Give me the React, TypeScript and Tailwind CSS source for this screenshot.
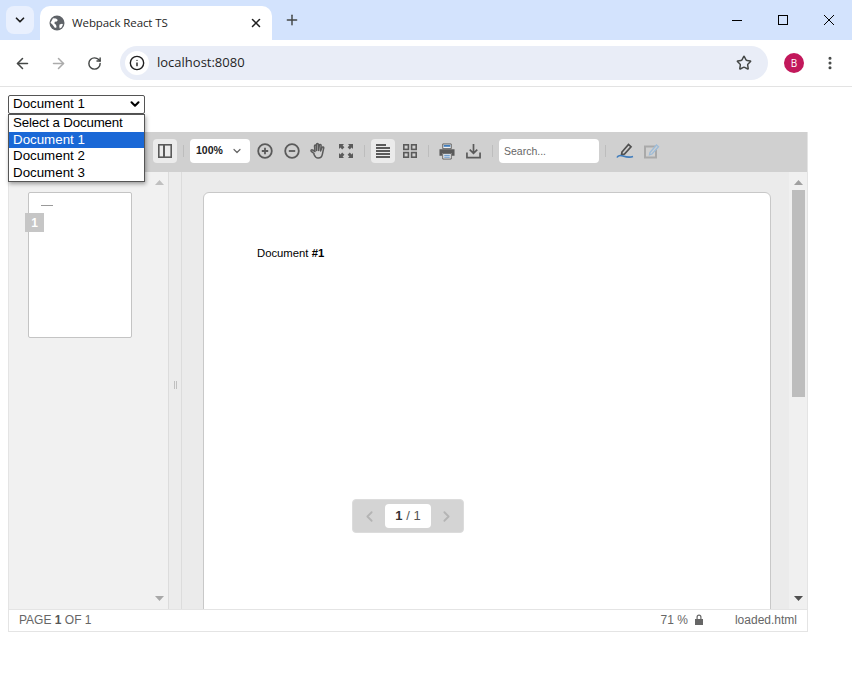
import { ChevronDown, Plus, X, ArrowLeft, ArrowRight, RotateCw, Star, EllipsisVertical, Info, ChevronLeft, ChevronRight } from "lucide-react";

const font = { sans: "font-['Liberation_Sans',Arial,sans-serif]" };

function Tri({ up, color }: { up?: boolean; color: string }) {
  return (
    <svg width="9" height="5" viewBox="0 0 9 5">
      <path d={up ? "M4.5 0L9 5H0z" : "M0 0h9L4.5 5z"} fill={color} />
    </svg>
  );
}

function ChromeBar() {
  return (
    <>
      {/* tab strip */}
      <div className="h-10 bg-[#d3e3fd] flex items-start shrink-0">
        <div className="w-7 h-7 ml-1.5 mt-1.5 rounded-lg bg-[#e9f0fe] flex items-center justify-center">
          <ChevronDown size={14} strokeWidth={3} className="text-[#1f1f1f]" />
        </div>
        <div className="w-[232px] h-[34px] ml-[6px] mt-1.5 bg-white rounded-t-[10px] flex items-center pl-[9px] pr-[9px]">
          <svg width="16" height="16" viewBox="0 0 16 16" className="shrink-0">
            <circle cx="8" cy="8" r="7.5" fill="#5f6368" />
            <path d="M4 3.2l3 .3 1.8 1.5-1 1.6-2 .2-.4 1.700 1.600 1.200.6 2.600L6 13 3.400 9.500 1.500 7.800zM10.500 9.500l2.500-.8 1 .8-1.500 3-1.800 1-.4-2z" fill="#fff" />
          </svg>
          <span className="ml-[7px] text-[11.5px] text-[#1f1f1f] flex-1 font-['Open_Sans',sans-serif] tracking-[-0.1px]">Webpack React TS</span>
          <X size={14} strokeWidth={2.6} className="text-[#1f1f1f]" />
        </div>
        <Plus size={16} strokeWidth={2.2} className="ml-[12px] mt-3 text-[#444746]" />
        <div className="flex-1" />
        <div className="w-[46px] h-10 flex items-center justify-center">
          <svg width="10" height="10" viewBox="0 0 10 10" fill="none" stroke="#000"><path d="M0 5.500h10" /></svg>
        </div>
        <div className="w-[46px] h-10 flex items-center justify-center">
          <svg width="10" height="10" viewBox="0 0 10 10" fill="none" stroke="#000"><rect x="0.500" y="0.500" width="9" height="9" /></svg>
        </div>
        <div className="w-[46px] h-10 flex items-center justify-center">
          <svg width="10" height="10" viewBox="0 0 10 10" fill="none" stroke="#000"><path d="M0 0l10 10M10 0L0 10" /></svg>
        </div>
      </div>
      {/* address row */}
      <div className="h-[47px] bg-white border-b border-[#e3e3e3] flex items-center shrink-0">
        <ArrowLeft size={17} strokeWidth={2.2} className="ml-[14px] text-[#444746]" />
        <ArrowRight size={17} strokeWidth={2.2} className="ml-[19px] text-[#ababab]" />
        <RotateCw size={15} strokeWidth={2.3} className="ml-[20px] text-[#444746]" />
        <div className="ml-[18px] w-[648px] h-[34px] rounded-full bg-[#e9edf7] flex items-center pl-[5px]">
          <div className="w-6 h-6 rounded-full bg-white flex items-center justify-center">
            <Info size={16} strokeWidth={2.1} className="text-[#1f1f1f]" />
          </div>
          <span className="ml-2 text-[13px] text-[#1f1f1f] flex-1 font-['Open_Sans',sans-serif]">localhost:8080</span>
          <Star size={16} strokeWidth={2.2} className="mr-[16px] text-[#444746]" />
        </div>
        <div className="ml-[16px] w-5 h-5 rounded-full bg-[#c2185b] text-white text-[10px] flex items-center justify-center font-['Open_Sans',sans-serif]">B</div>
        <EllipsisVertical size={16} strokeWidth={2.6} className="ml-[18px] text-[#444746]" />
      </div>
    </>
  );
}

function ViewerToolbar() {
  return (
    <div className="h-10 bg-[#d0d0d0] flex items-center pl-[144px] pb-[2px] shrink-0">
      <div className="w-6 h-6 rounded-sm bg-[#ebebeb] flex items-center justify-center">
        <svg width="14" height="14" viewBox="0 0 14 14" fill="none" stroke="#5a5a5a" strokeWidth="1.6">
          <rect x="0.800" y="0.800" width="12.400" height="12.400" />
          <path d="M6 1v12" strokeWidth="2" />
        </svg>
      </div>
      <div className="w-px h-3 bg-[#bdbdbd] ml-1.5" />
      <div className="ml-1.5 w-[60px] h-6 bg-white rounded-sm flex items-center pl-1.5 text-[10.5px] font-bold text-[#222]">
        100%
        <ChevronDown size={12} strokeWidth={2.4} className="ml-2 text-[#666]" />
      </div>
      <svg width="18" height="18" viewBox="0 0 18 18" className="ml-1.5" fill="none" stroke="#5a5a5a" strokeWidth="1.8">
        <circle cx="9" cy="9" r="6.800" />
        <path d="M5.800 9h6.400M9 5.800v6.400" />
      </svg>
      <svg width="18" height="18" viewBox="0 0 18 18" className="ml-[9px]" fill="none" stroke="#5a5a5a" strokeWidth="1.8">
        <circle cx="9" cy="9" r="6.800" />
        <path d="M5.800 9h6.400" />
      </svg>
      <svg width="18" height="18" viewBox="0 0 18 18" className="ml-[9px]" fill="none" stroke="#5a5a5a" strokeWidth="1.5" strokeLinecap="round" strokeLinejoin="round">
        <path d="M4 11.500L1.300 9.300c-.7-.8.300-2 1.300-1.300L5 9.500 4.500 4c0-1.200 1.700-1.200 1.800 0l.4 4.500-.2-6c0-1.200 1.800-1.200 1.900 0l.3 6 .6-5.200c.2-1.200 1.900-1 1.800.2l-.5 5.500 1.400-3.500c.5-1 2-.5 1.700.6l-1.300 6c-.4 2.200-2 3.900-4 3.900H8c-1.800 0-3-1.300-4-3.500z" />
      </svg>
      <svg width="16" height="16" viewBox="0 0 16 16" className="ml-[10px]" fill="#5a5a5a">
        <path d="M1 1h5L4.600 2.400 6.400 4.200 4.200 6.400 2.400 4.600 1 6zM15 1v5l-1.400-1.400-1.800 1.800-2.200-2.200 1.800-1.800L10 1zM1 15v-5l1.400 1.400 1.800-1.800 2.200 2.200-1.800 1.800L6 15zM15 15h-5l1.400-1.400-1.800-1.800 2.200-2.200 1.800 1.800L15 10z" />
      </svg>
      <div className="w-px h-3 bg-[#bdbdbd] ml-[10px]" />
      <div className="w-6 h-6 rounded-sm bg-[#ebebeb] flex items-center justify-center ml-1.5">
        <svg width="14" height="14" viewBox="0 0 14 14" fill="#5a5a5a">
          <path d="M0 0h10v2H0zM0 3h14v2H0zM0 6h14v2H0zM0 9h14v2H0zM0 12h14v2H0z" />
        </svg>
      </div>
      <svg width="14" height="14" viewBox="0 0 14 14" className="ml-2" fill="none" stroke="#5a5a5a" strokeWidth="1.6">
        <rect x="0.800" y="0.800" width="4.600" height="4.600" />
        <rect x="8.600" y="0.800" width="4.600" height="4.600" />
        <rect x="0.800" y="8.600" width="4.600" height="4.600" />
        <rect x="8.600" y="8.600" width="4.600" height="4.600" />
      </svg>
      <div className="w-px h-3 bg-[#bdbdbd] ml-[11px]" />
      <svg width="16" height="17" viewBox="0 0 17 17" className="ml-[10px]">
        <path d="M4 0.500h9v5H4z" fill="#f2f2f2" stroke="#5a5a5a" />
        <path d="M5 1.500h7v2H5z" fill="#3f7cbc" />
        <path d="M0.500 6h16v7h-3v-3h-10v3h-3z" fill="#5a5a5a" />
        <path d="M4 10.500h9v6H4z" fill="#f5f5f5" stroke="#5a5a5a" />
        <path d="M5.500 12.500h6M5.500 14.500h6" stroke="#3f7cbc" />
      </svg>
      <svg width="15" height="16" viewBox="0 0 16 16" className="ml-[11px]" fill="none" stroke="#5a5a5a" strokeWidth="1.800">
        <path d="M8 0.500v10M4 6.500l4 4 4-4" />
        <path d="M1 9.500v5.500h14V9.500" />
      </svg>
      <div className="w-px h-3 bg-[#bdbdbd] ml-[11px]" />
      <div className="ml-1.5 w-[100px] h-6 bg-white rounded-sm flex items-center pl-[5px] pt-px text-[10.5px] text-[#666]">Search...</div>
      <div className="w-px h-3 bg-[#bdbdbd] ml-1.5" />
      <svg width="18" height="18" viewBox="0 0 18 18" className="ml-[10px]" fill="none">
        <path d="M6 10L12.500 2.500l2.500 2.200L8.500 12l-3 1z" stroke="#505050" strokeWidth="1.700" />
        <path d="M1 15.500c1-2.500 3-2.500 6-1.500s6 2 10 .5" stroke="#3f7cbc" strokeWidth="1.600" />
      </svg>
      <svg width="16" height="16" viewBox="0 0 16 16" className="ml-[10px]" fill="none">
        <path d="M1 3.500h11v11H1z" stroke="#a9a9a9" strokeWidth="2" />
        <path d="M6 9.500L12.500 2l2 1.800L8 11l-2.500.8z" stroke="#9dbcd8" strokeWidth="1.300" fill="#d0d0d0" />
      </svg>
    </div>
  );
}

export default function App() {
  return (
    <div className={`w-[852px] h-[675px] bg-white overflow-hidden flex flex-col ${font.sans}`}>
      <ChromeBar />
      {/* page */}
      <div className="relative flex-1 px-2 pt-2">
        <div className="h-[19px] w-[137px] border border-[#555] rounded-[2px] bg-white flex items-center justify-between pl-1 pr-[2px] pb-px text-[13.33px] leading-none text-black">
          <span>Document 1</span>
          <ChevronDown size={14} strokeWidth={3.5} className="text-black" />
        </div>

        <div className="absolute left-2 top-[27px] z-10 w-[137px] border border-[#555] bg-white text-[13.33px] text-black shadow-[1px_2px_4px_rgba(0,0,0,0.35)] leading-[16.5px]">
          <div className="px-1 tracking-[-0.18px]">Select a Document</div>
          <div className="px-1 bg-[#1a68d6] text-white">Document 1</div>
          <div className="px-1">Document 2</div>
          <div className="px-1">Document 3</div>
        </div>

        <div className="relative mt-[18px] w-[800px] h-[500px] flex flex-col border-x border-b border-[#e4e4e4] overflow-hidden">
          <ViewerToolbar />
          <div className="flex flex-1 min-h-0">
            {/* thumbnails */}
            <div className="w-[159px] bg-[#f1f1f1] flex shrink-0">
              <div className="flex-1 pt-5 pl-[19px]">
                <div className="relative w-[104px] h-[146px] bg-white border border-[#c4c4c4] rounded-[2px]">
                  <div className="ml-3 mt-3 w-3 h-px bg-[#9a9a9a]" />
                  <div className="absolute -left-[4px] top-5 w-[19px] h-[19px] bg-[#c6c6c6] text-white text-xs font-bold flex items-center justify-center">1</div>
                </div>
              </div>
              <div className="w-[17px] flex flex-col items-center justify-between py-2">
                <Tri up color="#c0c0c0" />
                <Tri color="#a8a8a8" />
              </div>
            </div>
            {/* splitter */}
            <div className="w-[14px] bg-[#ececec] border-l border-r border-[#dcdcdc] flex items-center justify-center pb-3 shrink-0">
              <div className="w-[3px] h-2 border-x border-[#c0c0c0]" />
            </div>
            {/* document */}
            <div className="flex-1 bg-[#ebebeb] pt-5 pl-[21px] overflow-hidden">
              <div className="w-[568px] h-[600px] bg-white border border-[#c8c8c8] rounded-[6px] pt-[52px] pl-[53px] text-[11.3px] text-black">
                Document <b>#1</b>
              </div>
            </div>
            {/* scrollbar */}
            <div className="w-[18px] bg-[#f0f0f0] flex flex-col items-center py-2 shrink-0">
              <Tri up color="#a0a0a0" />
              <div className="w-[13px] h-[207px] bg-[#bdbdbd] mt-[5px] ml-[1px]" />
              <div className="flex-1" />
              <Tri color="#505050" />
            </div>
          </div>
          {/* status bar */}
          <div className="h-[22px] bg-white border-t border-[#e4e4e4] flex items-center pl-[10px] pr-[10px] pb-[2px] text-xs text-[#666] shrink-0">
            <span>PAGE <b className="text-[#555]">1</b> OF 1</span>
            <span className="ml-auto">71 %</span>
            <svg width="10" height="11" viewBox="0 0 10 11" className="ml-[6px]" fill="#666">
              <path d="M1 5h8v6H1zM2.500 5V3a2.500 2.500 0 0 1 5 0v2H6.300V3a1.300 1.300 0 0 0-2.600 0v2z" />
            </svg>
            <span className="ml-[31px]">loaded.html</span>
          </div>

          {/* page number pill */}
          <div className="absolute left-[343px] top-[367px] w-[112px] h-[34px] rounded-[4px] bg-[#d4d4d4] border border-[#dcdcdc] flex items-center justify-between px-[8px]">
            <ChevronLeft size={17} strokeWidth={2.6} className="text-[#b4b4b4]" />
            <div className="w-[46px] h-6 bg-white rounded-sm flex items-center justify-center text-[13px] text-[#555]">
              <b className="text-[#333]">1</b>&nbsp;/ 1
            </div>
            <ChevronRight size={17} strokeWidth={2.6} className="text-[#b4b4b4]" />
          </div>
        </div>
      </div>
    </div>
  );
}
